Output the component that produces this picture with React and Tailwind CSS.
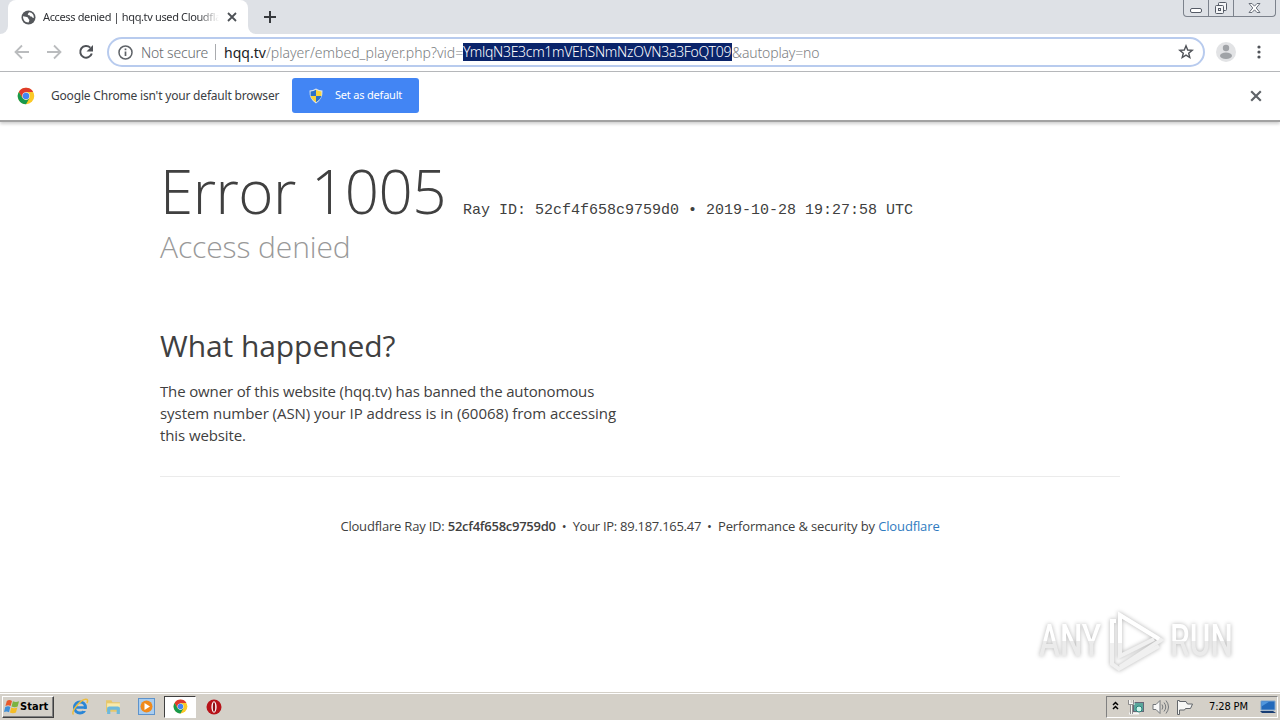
import React from "react";

const VID = "YmlqN3E3cm1mVEhSNmNzOVN3a3FoQT09";

function ChromeLogo({ size }) {
  return (
    <svg width={size} height={size} viewBox="0 0 48 48" className="shrink-0">
      <circle cx="24" cy="24" r="22" fill="#fbc926" />
      <path d="M4.9 13A22 22 0 0 1 43.1 13H24L14.5 29.5Z" fill="#df3a2c" />
      <path d="M4.9 13 14.5 29.5 24 35 33 30 24 46A22 22 0 0 1 4.9 13Z" fill="#17994c" />
      <circle cx="24" cy="24" r="10" fill="#e8eef8" />
      <circle cx="24" cy="24" r="8.5" fill="#4285f4" />
    </svg>
  );
}

function CloseIcon({ size, color }) {
  return (
    <svg width={size} height={size} viewBox="0 0 10 10" className="shrink-0">
      <path d="M1 1 9 9M9 1 1 9" stroke={color} strokeWidth="1.8" />
    </svg>
  );
}

function WindowButtons() {
  return (
    <div className="mr-[4px] flex h-[17px] w-[93px] rounded-b-[4px] border border-t-0 border-[#7c828c] text-[#555b66]">
      <div className="flex w-[25px] items-end justify-center border-r border-[#7c828c] pb-[3px]">
        <div className="h-[5px] w-[12px] rounded-[2px] border border-[#555b66] bg-white" />
      </div>
      <div className="flex w-[25px] items-center justify-center border-r border-[#7c828c]">
        <svg width="14" height="14" viewBox="0 0 14 14" fill="#f4f5f7" stroke="#555b66">
          <rect x="4.5" y="1.5" width="8" height="8" rx="1" />
          <rect x="1.5" y="4.5" width="8" height="8" rx="1" />
          <rect x="4.5" y="7.5" width="2" height="2" />
        </svg>
      </div>
      <div className="flex flex-1 items-center justify-center">
        <svg width="13" height="12" viewBox="0 0 13 12" fill="#fff" stroke="#6b717c">
          <path d="M1 1.5h3l2.5 2.7L9 1.5h3L8.2 6l3.8 4.5H9L6.5 7.8 4 10.5H1L4.8 6Z" />
        </svg>
      </div>
    </div>
  );
}

function TabStrip() {
  return (
    <div className="flex h-[34px] bg-[#dee1e6]">
      <div className="flex w-[8px] items-end bg-white">
        <div className="h-full w-full rounded-br-[8px] bg-[#dee1e6]" />
      </div>
      <div className="flex h-full w-[240px] items-center rounded-t-[8px] bg-white pl-[13px]">
        <svg width="15" height="15" viewBox="0 0 15 15" className="shrink-0">
          <circle cx="7.5" cy="7.5" r="7" fill="#54575b" />
          <path d="M2 6.3c2 .5 3.6.5 4.8 1.3.7.7.2 1.6 1.2 2 .8.4.2 1.5-.5 2.9C4 12.6 2 10 2 6.3Z" fill="#fff" />
          <path d="M8 2.2c-.3 1.2-1.5 1.2-1.2 2.3.3.9 1.7.4 2 1.3.3 1 1.5.5 2.2 1.1.6.5.9 1.5 1.7 1.1C13.2 5 11.5 2.5 8 2.2Z" fill="#fff" />
        </svg>
        <div className="ml-[7px] w-[176px] overflow-hidden whitespace-nowrap mask-r-from-88% font-['Noto_Sans',sans-serif] text-[11px] tracking-[-0.36px] text-[#303236]">
          Access denied | hqq.tv used Cloudfla
        </div>
        <div className="ml-[8px]">
          <CloseIcon size={10} color="#4d5156" />
        </div>
      </div>
      <div className="w-[8px] bg-white">
        <div className="h-full w-full rounded-bl-[8px] bg-[#dee1e6]" />
      </div>
      <svg width="14" height="34" viewBox="0 0 14 34" className="ml-[7px]">
        <path d="M7 11v12M1 17h12" stroke="#36393d" strokeWidth="2" />
      </svg>
      <div className="ml-auto">
        <WindowButtons />
      </div>
    </div>
  );
}

function Toolbar() {
  return (
    <div className="flex h-[38px] items-center border-b border-[#b4b6b9] bg-white pb-px">
      <svg width="100" height="36" viewBox="0 0 100 36" fill="none" strokeWidth="1.8">
        <path d="M29 18H16M22 11.5 15.5 18 22 24.5" stroke="#babcbe" />
        <path d="M47 18h13M54 11.5 60.5 18 54 24.5" stroke="#babcbe" />
        <path d="M90.3 13.6A5.9 5.9 0 1 0 91.8 19.5" stroke="#4f5257" strokeWidth="2" />
        <path d="M93 11v6.5h-6.5Z" fill="#4f5257" />
      </svg>
      <div className="ml-[7px] flex h-[30px] w-[1098px] items-center rounded-full border-2 border-[#b8cbee] pl-[9px] pr-[9px] font-['Noto_Sans',sans-serif] text-[14px] font-light whitespace-nowrap">
        <svg width="15" height="15" viewBox="0 0 15 15" className="shrink-0">
          <circle cx="7.5" cy="7.5" r="6.5" fill="none" stroke="#5f6368" strokeWidth="1.5" />
          <path d="M7.5 6.5v4.5M7.5 3.6v1.7" stroke="#5f6368" strokeWidth="1.7" />
        </svg>
        <span className="ml-[8px] w-[67px] tracking-[-0.2px] text-[#66696d]">Not secure</span>
        <span className="ml-[7px] h-[16px] w-px bg-[#a9abae]" />
        <span className="ml-[8px] w-[239px] tracking-[0.02px] text-[#7b7e82]">
          <span className="font-normal text-[#202124]">hqq.tv</span>/player/embed_player.php?vid=
        </span>
        <span className="h-[18px] w-[269px] bg-[#0a246a] leading-[18px] tracking-[-0.3px] text-white">{VID}</span>
        <span className="tracking-[-0.15px] text-[#7b7e82]">&amp;autoplay=no</span>
        <svg width="16" height="16" viewBox="0 0 16 16" className="ml-auto shrink-0">
          <path d="M8 1.8 9.7 6l4.5.3-3.5 2.9 1.1 4.4L8 11.2l-3.8 2.4 1.1-4.4L1.8 6.3 6.3 6Z" fill="none" stroke="#505359" strokeWidth="1.4" />
        </svg>
      </div>
      <svg width="20" height="20" viewBox="0 0 20 20" className="ml-[11px]">
        <circle cx="10" cy="10" r="10" fill="#e2e3e5" />
        <circle cx="10" cy="6" r="3.2" fill="#a0a3a7" />
        <ellipse cx="10" cy="13.7" rx="6" ry="3.2" fill="#a0a3a7" />
      </svg>
      <svg width="4" height="16" viewBox="0 0 4 16" className="ml-[21px]" fill="#505359">
        <circle cx="2" cy="3" r="1.6" />
        <circle cx="2" cy="8" r="1.6" />
        <circle cx="2" cy="13" r="1.6" />
      </svg>
    </div>
  );
}

function InfoBar() {
  return (
    <div className="flex h-[50px] items-center border-b-2 border-[#a2a2a2] bg-white pr-[18px] pb-px pl-[17px] font-['Noto_Sans',sans-serif] shadow-[0_2px_3px_#d0d0d0]">
      <ChromeLogo size={18} />
      <span className="ml-[16px] w-[241px] text-[12px] tracking-[-0.19px] whitespace-nowrap text-[#3c4043]">
        Google Chrome isn't your default browser
      </span>
      <button className="flex h-[35px] w-[127px] items-center rounded-[3px] bg-[#4285f4] pl-[16px] text-[11px] tracking-[-0.2px] whitespace-nowrap text-white">
        <svg width="16" height="16" viewBox="0 0 16 16" className="mr-[11px] shrink-0">
          <path d="M8 .5Q11 2.5 14.5 2.5 15 11 8 15.5 1 11 1.5 2.5 5 2.5 8 .5Z" fill="#dce5ea" />
          <path d="M8 1.8V8H2.6V3.5Q5.5 3.5 8 1.8Z" fill="#2b70c9" />
          <path d="M8 1.8V8h5.4V3.5Q10.5 3.5 8 1.8Z" fill="#f8d33b" />
          <path d="M2.6 8H8v6.2Q3.5 11.5 2.6 8Z" fill="#f8d33b" />
          <path d="M13.4 8H8v6.2Q12.5 11.5 13.4 8Z" fill="#2b70c9" />
        </svg>
        Set as default
      </button>
      <div className="ml-auto">
        <CloseIcon size={12} color="#5f6368" />
      </div>
    </div>
  );
}

function ErrorPage() {
  return (
    <main className="h-[570px] px-[160px] pt-[32px] font-['Open_Sans',sans-serif] text-[#404040]">
      <h1 className="flex h-[74px] items-baseline leading-[74px] whitespace-nowrap">
        <span className="w-[303px] text-[60px] font-light tracking-[-0.5px]">Error 1005</span>
        <span className="font-['Liberation_Mono',monospace] text-[15px]">
          Ray ID: 52cf4f658c9759d0 • 2019-10-28 19:27:58 UTC
        </span>
      </h1>
      <h2 className="h-[38px] text-[30px] leading-[37px] font-light tracking-[-0.1px] text-[#999]">Access denied</h2>
      <h2 className="mt-[60px] h-[39px] text-[30px] leading-[39px] tracking-[-0.07px]">What happened?</h2>
      <p className="mt-[15px] text-[15px] leading-[22px] whitespace-nowrap">
        <span className="tracking-[-0.14px]">
          The owner of this website (hqq.tv) has banned the autonomous
        </span>
        <br />
        <span className="tracking-[-0.05px]">
          system number (ASN) your IP address is in (60068) from accessing
        </span>
        <br />
        <span className="tracking-[-0.1px]">this website.</span>
      </p>
      <footer className="mt-[30px] flex justify-center border-t border-[#ebebeb] pt-[39px] text-[13px] leading-[20px] whitespace-nowrap">
        <span className="tracking-[-0.2px]">
          Cloudflare Ray ID: <strong className="font-semibold tracking-[-0.26px]">52cf4f658c9759d0</strong>
        </span>
        <span className="mx-[6px]">•</span>
        <span className="tracking-[-0.28px]">Your IP: 89.187.165.47</span>
        <span className="mx-[6px]">•</span>
        <span className="tracking-[-0.13px]">
          Performance &amp; security by <a className="text-[#2f7bbf]">Cloudflare</a>
        </span>
      </footer>
    </main>
  );
}

// Watermark floating over the page
function Watermark() {
  return (
    <div className="absolute top-[607px] left-[1039px] flex items-center font-['Roboto',sans-serif] text-[45px] font-medium [filter:drop-shadow(0_0_2px_#b4b4b4)]">
      <span className="w-[66px]">
        <span className="inline-block origin-left scale-x-[0.7] bg-linear-to-b from-white from-50% to-[#ebebeb] to-50% bg-clip-text text-transparent">
          ANY
        </span>
      </span>
      <svg width="60" height="68" viewBox="0 0 60 68" fill="none" strokeWidth="4">
        <path d="M15 50V8L56 33 15 60" stroke="#f0f0f0" />
        <path d="M15 9v40l34-17" stroke="#f0f0f0" />
        <path d="M11 14H7v43l7 5 40-23" stroke="#f0f0f0" />
        <path d="M7 36V14h4M15 36V8l39 24" stroke="#fff" />
      </svg>
      <span className="ml-[5px] w-[66px]">
        <span className="inline-block origin-left scale-x-[0.7] bg-linear-to-b from-white from-50% to-[#ebebeb] to-50% bg-clip-text text-transparent">
          RUN
        </span>
      </span>
    </div>
  );
}

function Flag() {
  return (
    <svg width="16" height="15" viewBox="0 0 16 16" className="shrink-0">
      <path d="M2.5 2Q5 .3 8 2L6.5 7.5Q4 6 1 7.5Z" fill="#e8592b" />
      <path d="M9 2.5Q12 4 15.5 2.5L14 8Q11 9.500 7.500 8Z" fill="#7cb342" />
      <path d="M.8 8.5Q4 7 6.2 8.5L4.8 14Q2 12.5-.6 14Z" fill="#3f8fd8" />
      <path d="M7.2 9Q10 10.500 13.700 9L12.200 14.500Q9 16 5.800 14.500Z" fill="#f5bd27" />
    </svg>
  );
}

function Taskbar() {
  return (
    <div className="flex h-[28px] items-center border-t border-[#d4d0c8] bg-[#d4d0c8] pl-[2px] font-['DejaVu_Sans_Condensed','DejaVu_Sans',sans-serif] text-[11px] text-black shadow-[inset_0_1px_0_#fff]">
      <button className="flex h-[22px] w-[52px] items-center border border-t-white border-r-[#404040] border-b-[#404040] border-l-white pl-px font-bold shadow-[inset_-1px_-1px_0_#808080]">
        <Flag />
        <span className="pt-[2px] tracking-[0.05px]">Start</span>
      </button>
      <svg width="18" height="18" viewBox="0 0 18 18" className="ml-[17px]" fill="none">
        <circle cx="9" cy="9.5" r="5.5" stroke="#2a86d6" strokeWidth="3" />
        <path d="M4 9.5h10" stroke="#2a86d6" strokeWidth="2.5" />
        <path d="M12 11h4v2h-4Z" fill="#d4d0c8" />
        <path d="M2.5 16.5C-1 14 11-.5 16 1.5c1 .5.6 2.5-.2 3.5" stroke="#edbd3d" strokeWidth="1.5" />
      </svg>
      <svg width="17" height="17" viewBox="0 0 16 16" className="ml-[16px]">
        <path d="M1 2h5l1 2h7v9H1Z" fill="#e7c76a" />
        <path d="M2 5h12v5H2Z" fill="#f8eaab" />
        <path d="M2 15V9.5Q2 8 4 8h8q2 0 2 1.5V15h-3v-4H5v4Z" fill="#6db9dc" />
      </svg>
      <svg width="17" height="17" viewBox="0 0 17 17" className="ml-[16px]">
        <rect x=".5" y=".5" width="16" height="16" fill="#a9cdef" stroke="#5d93cc" />
        <circle cx="8.5" cy="8.5" r="6" fill="#f08a1c" />
        <path d="M6.500 5v7l5.500-3.500Z" fill="#fff" />
      </svg>
      <div className="ml-[9px] flex h-[22px] w-[32px] items-center justify-center border border-t-[#404040] border-r-white border-b-white border-l-[#404040] bg-white">
        <ChromeLogo size={15} />
      </div>
      <svg width="16" height="16" viewBox="0 0 16 16" className="ml-[10px]">
        <circle cx="8" cy="8" r="7.500" fill="#b71319" />
        <ellipse cx="8" cy="8" rx="2.600" ry="5.800" fill="#fff" />
        <ellipse cx="8" cy="8" rx="1.200" ry="4.800" fill="#8f1015" />
      </svg>
      <div className="mr-[2px] ml-auto flex h-[22px] w-[172px] items-center border border-t-[#808080] border-r-white border-b-white border-l-[#808080]">
        <svg width="7" height="10" viewBox="0 0 7 10" className="mb-[2px] ml-[5px]" fill="none" stroke="#000" strokeWidth="1.5">
          <path d="M1 4 3.5 1.5 6 4M1 8 3.5 5.5 6 8" />
        </svg>
        <svg width="17" height="16" viewBox="0 0 17 16" className="ml-[9px]">
          <rect x="5.5" y="3.5" width="10" height="9" fill="#5aa69c" stroke="#667" />
          <path d="M1.500 1v4h4V1M3.500 5v10M1 14.500h10" fill="none" stroke="#f7f7f7" strokeWidth="2" />
          <path d="M.5 1v4.500h5V1M2.500 6v9M4.500 6v9" fill="none" stroke="#666" strokeWidth=".7" />
          <circle cx="11" cy="10" r="3" fill="#d0f3eb" stroke="#27857a" />
        </svg>
        <svg width="17" height="16" viewBox="0 0 17 16" className="ml-[7px]" fill="none" stroke="#73777b">
          <path d="M1 5.500h3l4-4v13l-4-4H1Z" fill="#f8f8f8" />
          <path d="M10 5.500q1.800 2.500 0 5M12 3.500q3.500 4.500 0 9M14 1.500q5 6.500 0 13" />
        </svg>
        <svg width="17" height="16" viewBox="0 0 17 16" className="ml-[7px]" fill="#f7f7f5" stroke="#62666a">
          <path d="M1.500 1.500v14h2V11h5l1-1.500h5l2-4.500h-5L10 2.500H3.500v-1Z" />
        </svg>
        <span className="ml-[16px] w-[41px] pt-[2px] tracking-[-0.15px] whitespace-nowrap">7:28 PM</span>
        <svg width="16" height="16" viewBox="0 0 16 16" className="ml-[10px]">
          <path d="M1 2h14v9H1Z" fill="#2269bb" stroke="#7fa6cf" />
          <path d="M1.500 2.500h8l-8 5Z" fill="#5096dd" />
          <path d="M0 12h13l3 2H2Z" fill="#193e74" />
        </svg>
      </div>
    </div>
  );
}

function App() {
  return (
    <div className="relative h-[720px] w-[1280px] overflow-hidden bg-white">
      <TabStrip />
      <Toolbar />
      <InfoBar />
      <ErrorPage />
      <Taskbar />
      <Watermark />
    </div>
  );
}

export default App;
